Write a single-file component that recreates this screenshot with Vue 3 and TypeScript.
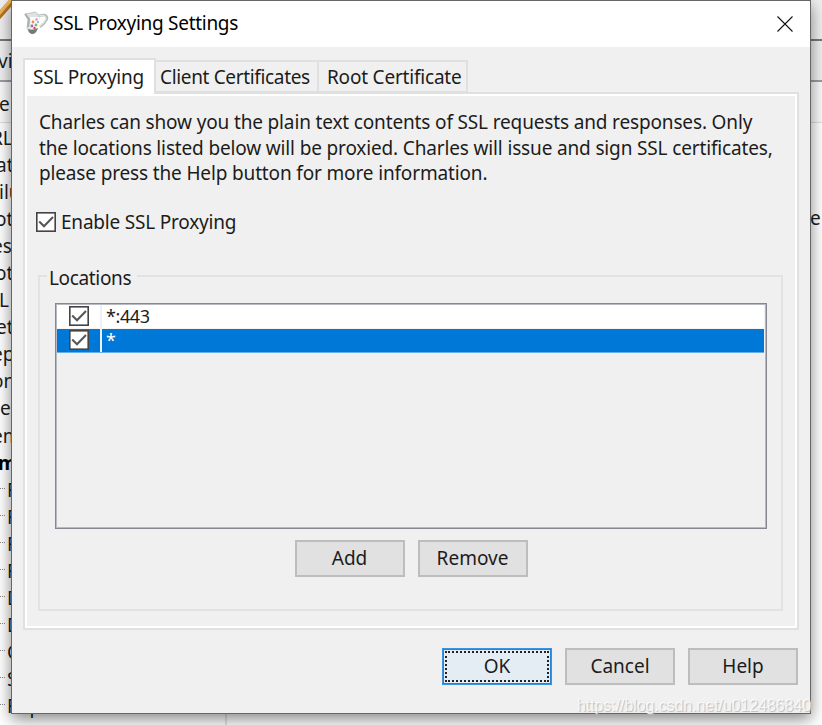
<script setup lang="ts">
import { ref } from 'vue'

interface Location { pattern: string; enabled: boolean; selected: boolean }
interface Item { text: string; shift: number }

const locations = ref<Location[]>([
  { pattern: '*:443', enabled: true, selected: false },
  { pattern: '*', enabled: true, selected: true },
])

const menuText: Item[] = [
  { text: 'RL', shift: -9 }, { text: 'at', shift: -4 }, { text: 'ilu', shift: -1 },
  { text: 'ot', shift: -5 }, { text: 'es', shift: -8 }, { text: 'ot', shift: -5 },
  { text: 'L', shift: -1 }, { text: 'et', shift: -4 }, { text: 'ep', shift: -8 },
  { text: 'on', shift: -8 }, { text: 'e', shift: 0 }, { text: 'em', shift: -8 },
]
const treeText = ['F', 'F', 'F', 'F', 'D', 'D', 'C', 'S', 'Rep']
</script>

<template>
  <div class="desktop">
    <div class="backdrop">
      <div class="strip toolbar">
        <svg class="pencil" width="14" height="26" viewBox="0 0 14 26"><path d="M-2 17 13 0" stroke="#b87524" stroke-width="6" /><path d="M-2 15 11 0" stroke="#f3b755" stroke-width="3" /></svg>
      </div>
      <div class="strip tabbar">vi</div>
      <div class="strip header">e</div>
      <div v-for="(t, i) in menuText" :key="'m' + i" class="item" :style="{ marginLeft: t.shift + 'px' }">{{ t.text }}</div>
      <div class="item strong">m</div>
      <div v-for="(t, i) in treeText" :key="'t' + i" class="item leaf"><i></i><span>{{ t }}</span></div>
      <span class="right-text">e</span>
      <span class="divider"></span>
    </div>

    <div class="dialog">
      <div class="titlebar">
        <svg class="jug" width="25" height="25" viewBox="0 0 25 25">
          <path d="M1 3 7 2 11 1 15 4 14 17 11 22Q8 24 5 21L3 17 4 9Z" fill="#dfe3e0" stroke="#b5bcb8" stroke-width=".8" />
          <path d="M15 5Q23 2 23 8 21 12 16 16" fill="none" stroke="#b4bcb7" stroke-width="2.6" />
          <path d="M15 5Q22 3 22 8 20 12 16 15" fill="none" stroke="#e5e9e6" stroke-width="1.2" />
          <path d="M6 6 15 6 15 17 7 18Z" fill="#fafbfa" />
          <path d="M1 3 5 8 4 16" fill="none" stroke="#a8b0aa" stroke-width="2" />
          <path d="M4 18Q9 20 14 17L12 21Q8 25 5 21Z" fill="#727b76" />
          <circle cx="9" cy="11" r="1.4" fill="#eb8b58" /><circle cx="12.500" cy="8.500" r="1.200" fill="#e58cbd" />
          <circle cx="8" cy="15" r="1.400" fill="#b15bb4" /><circle cx="12" cy="14" r="1.400" fill="#7dba62" />
          <circle cx="10.500" cy="17" r="1.200" fill="#cf4964" /><circle cx="14" cy="11" r="1" fill="#72a8cf" />
        </svg>
        <span class="title">SSL Proxying Settings</span>
        <svg class="close" width="16" height="16" viewBox="0 0 16 16"><path d="M.5.5 15.500 15.500M15.500.5.5 15.500" stroke="#111" stroke-width="1.100" /></svg>
      </div>

      <div class="body">
        <div class="tabs">
          <div class="tab active">SSL Proxying</div>
          <div class="tab second">Client Certificates</div>
          <div class="tab third">Root Certificate</div>
        </div>
        <div class="panel">
          <div class="intro">
            <div>Charles can show you the plain text contents of SSL requests and responses. Only</div>
            <div>the locations listed below will be proxied. Charles will issue and sign SSL certificates,</div>
            <div>please press the Help button for more information.</div>
          </div>
          <div class="enable">
            <svg class="check" width="20" height="20" viewBox="0 0 20 20"><rect x=".8" y=".8" width="18.400" height="18.400" fill="#fff" stroke="#444" stroke-width="1.600" /><path d="M3.200 9.500 8 14.300 17 5" fill="none" stroke="#555" stroke-width="2" /></svg>
            <span>Enable SSL Proxying</span>
          </div>
          <div class="group">
            <div class="legend">Locations</div>
            <div class="list">
              <div v-for="loc in locations" :key="loc.pattern" class="row" :class="{ selected: loc.selected }">
                <div class="cell-check">
                  <svg class="check" width="20" height="20" viewBox="0 0 20 20"><rect x=".8" y=".8" width="18.400" height="18.400" fill="#fff" stroke="#444" stroke-width="1.600" /><path v-if="loc.enabled" d="M3.200 9.500 8 14.300 17 5" fill="none" stroke="#555" stroke-width="2" /></svg>
                </div>
                <div class="cell-name">{{ loc.pattern }}</div>
              </div>
            </div>
            <div class="actions">
              <button>Add</button>
              <button>Remove</button>
            </div>
          </div>
        </div>
        <div class="footer">
          <button class="primary">OK</button>
          <button>Cancel</button>
          <button>Help</button>
        </div>
      </div>
    </div>
    <div class="watermark">https://blog.csdn.net/u012486840</div>
  </div>
</template>

<style>
body { overflow: hidden; }
</style>

<style scoped>
* { box-sizing: border-box; }
.desktop { position: relative; width: 822px; height: 725px; overflow: hidden; background: #fff; font-family: "Noto Sans", "Open Sans", sans-serif; font-size: 19px; color: #1c1c1c; white-space: nowrap; }
.backdrop { position: absolute; inset: 0; line-height: 27px; }
.strip { border-bottom: 1px solid #ddd; }
.toolbar { height: 41px; background: #f0f0f0; border-bottom: 2px solid #777; }
.pencil { display: block; }
.tabbar { height: 41px; padding-top: 7px; background: #f0f0f0; border-bottom: 2px solid #9a9da5; margin-left: -2px; }
.header { height: 41px; padding-top: 9px; margin-left: -1px; background: #fafafa; }
.item { height: 27.050px; padding-top: 2px; }
.item.strong { font-weight: 700; margin-left: -2px; color: #000; }
.leaf { display: flex; margin-left: 0; }
.leaf i { width: 5px; height: 12px; border-bottom: 1px dotted #888; }
.leaf span { margin-left: 2px; }
.right-text { position: absolute; left: 810px; top: 205px; }
.divider { position: absolute; left: 225px; top: 712px; width: 2px; height: 13px; background: #e4e4e4; }

.dialog { position: absolute; left: 11px; top: 0; width: 800px; height: 714px; border: 1px solid #666; background: #f0f0f0; box-shadow: 0 5px 15px rgba(0, 0, 0, .48); display: flex; flex-direction: column; }
.titlebar { height: 46px; flex: none; background: #fff; display: flex; align-items: center; padding: 0 17px 0 12px; color: #000; }
.title { flex: 1; margin: -2px 0 0 4px; letter-spacing: -.29px; }
.jug { margin-top: -1px; }
.body { padding: 11px 11px 0; }
.tabs { display: flex; align-items: flex-end; height: 36px; position: relative; z-index: 1; margin-bottom: -2px; }
.tab { display: flex; align-items: center; height: 33px; border: 2px solid #e0e0e0; border-left: 0; margin-bottom: 1px; line-height: 24px; }
.tab.active { width: 133px; height: 36px; border: 2px solid #e0e0e0; border-bottom: 0; background: #fff; margin-bottom: 0; padding-left: 8px; letter-spacing: -.25px; }
.second { width: 163px; padding-left: 4px; letter-spacing: -.34px; }
.third { width: 149px; padding-left: 8px; letter-spacing: -.2px; }
.panel { height: 538px; border: 2px solid #e0e0e0; box-shadow: inset 0 0 0 2px #fff; padding: 14px 14px 0; }
.intro { line-height: 25.500px; height: 78px; padding-top: 2px; letter-spacing: -.15px; }
.enable { display: flex; align-items: center; height: 26px; margin: 23px 0 0 -3px; letter-spacing: -.2px; }
.enable span { margin-left: 5px; }
.group { height: 336px; border: 2px solid #e2e2e2; margin: 40px 0 0 -1px; padding: 0 14px 0 15px; }
.legend { width: 90px; height: 26px; margin: -12px 0 0 -8px; padding-left: 2px; line-height: 26px; background: #f0f0f0; letter-spacing: -.35px; }
.list { height: 226px; margin-top: 12px; border: 1px solid #858792; box-shadow: inset 0 0 0 1px #b8bac2; padding: 1px; }
.row { display: flex; height: 24px; background: #fff; margin-right: 1px; border-bottom: 1px solid #f5f5f5; }
.row.selected { background: #0078d7; color: #fff; border-bottom-color: #65aee7; }
.cell-check { width: 45px; padding-left: 12px; padding-top: 1px; border-right: 2px solid #edf1f5; }
.check { display: block; flex: none; }
.cell-name { padding-left: 4px; line-height: 22px; font-size: 18px; letter-spacing: -.4px; }
.actions { display: flex; justify-content: center; gap: 13px; margin-top: 11px; }
button { width: 110px; height: 37px; padding: 0 0 1px; border: 1px solid #bdbdbd; box-shadow: inset 0 0 0 1px #bdbdbd; background: #e1e1e1; font: inherit; color: inherit; }
.footer { display: flex; justify-content: flex-end; gap: 13px; margin-top: 18px; padding-right: 1px; }
.primary { border-color: #3c93dd; box-shadow: inset 0 0 0 1px #2384d8; background: #e5edf4; outline: 2px dotted #222; outline-offset: -5px; }
.watermark { position: absolute; left: 577px; top: 695px; font: 16px/22px "Liberation Sans", Arial, sans-serif; letter-spacing: -.08px; color: rgba(255, 255, 255, .75); text-shadow: 1px 1px 1px #bbb; }
</style>
